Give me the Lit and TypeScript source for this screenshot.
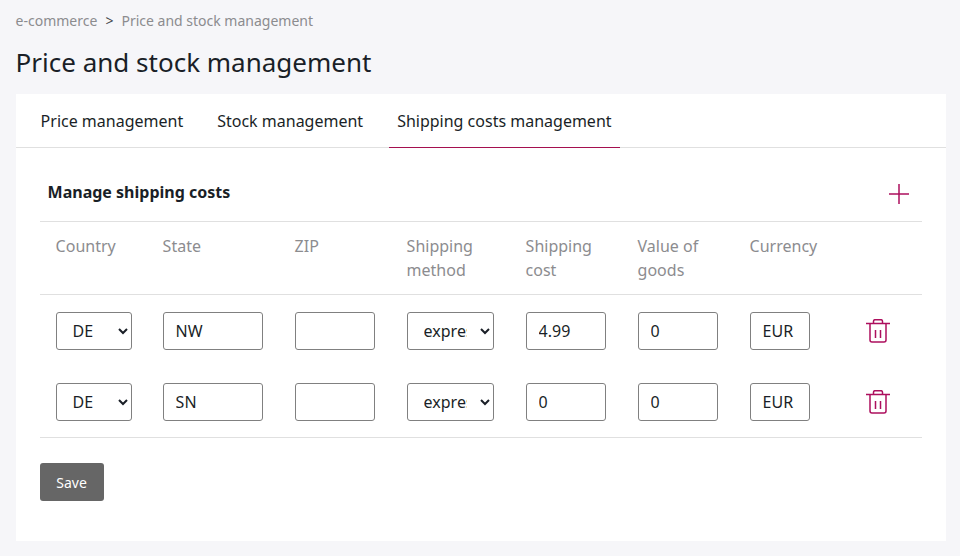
import { html, css, LitElement } from 'lit';
import { customElement, state } from 'lit/decorators.js';

interface ShippingRow {
  country: string;
  state: string;
  zip: string;
  method: string;
  cost: string;
  goods: string;
  currency: string;
}

@customElement('app-root')
export class AppRoot extends LitElement {
  static override styles = css`
    :host {
      display: block;
      min-height: 556px;
      box-sizing: border-box;
      padding: 12px 14px 15px 15.6px;
      background: #f6f6f9;
      color: #1a1f27;
      font-family: 'Noto Sans', sans-serif;
      font-size: 16px;
    }

    .breadcrumb {
      display: flex;
      gap: 8px;
      height: 18px;
      font-size: 14px;
      line-height: 18px;
      color: #8c8c8f;
    }

    .breadcrumb .sep {
      color: #44474d;
    }

    h1 {
      margin: 14px 0 14px;
      font-size: 26px;
      font-weight: 400;
      line-height: 36px;
    }

    .card {
      background: #fff;
      height: 447px;
    }

    .tabs {
      display: flex;
      gap: 18px;
      height: 53px;
      padding-left: 17px;
      border-bottom: 1px solid #e0e0e0;
    }

    .tab {
      height: 54px;
      box-sizing: border-box;
      padding: 15px 8px 0;
      line-height: 24px;
    }

    .tab.active {
      border-bottom: 1px solid #a5104f;
    }

    .body {
      padding: 0 24px;
    }

    .heading {
      display: flex;
      justify-content: space-between;
      align-items: flex-start;
      height: 74px;
      padding: 32px 13px 0 8px;
      box-sizing: border-box;
      border-bottom: 1px solid #e0e0e0;
    }

    .heading h2 {
      margin: 0;
      font-size: 16px;
      font-weight: 700;
      line-height: 24px;
    }

    .heading svg {
      display: block;
      margin-top: 4px;
    }

    .row {
      display: grid;
      grid-template-columns: 107px 132px 112px 119px 112px 112px 116px 1fr;
      padding-left: 16px;
    }

    .head {
      height: 73px;
      padding-top: 12px;
      box-sizing: border-box;
      border-bottom: 1px solid #e0e0e0;
      line-height: 24px;
      color: #8c8c8f;
    }

    .rows {
      display: flex;
      flex-direction: column;
      gap: 33px;
      padding: 17px 0 16px;
      border-bottom: 1px solid #e0e0e0;
    }

    .rows .row {
      align-items: center;
      height: 38px;
    }

    input,
    select {
      box-sizing: border-box;
      height: 38px;
      margin: 0;
      background: #fff;
      border: 1px solid #808080;
      border-radius: 3px;
      color: #1a1f27;
      font: inherit;
    }

    input {
      padding: 0 12px;
    }

    select {
      padding: 0 10px 0 12px;
    }

    .w-country { width: 76px; }
    .w-state { width: 100px; }
    .w-num { width: 80px; }
    .w-method { width: 87px; }
    .w-currency { width: 60px; }

    .trash {
      display: block;
    }

    .save {
      display: block;
      width: 64px;
      height: 38px;
      margin-top: 25px;
      padding: 0;
      background: #666;
      border: none;
      border-radius: 3px;
      color: #fff;
      font: inherit;
      font-size: 14px;
    }
  `;

  @state()
  private rows: ShippingRow[] = [
    { country: 'DE', state: 'NW', zip: '', method: 'express', cost: '4.99', goods: '0', currency: 'EUR' },
    { country: 'DE', state: 'SN', zip: '', method: 'express', cost: '0', goods: '0', currency: 'EUR' },
  ];

  private renderRow(row: ShippingRow) {
    return html`
      <div class="row">
        <div>
          <select class="w-country"><option>${row.country}</option></select>
        </div>
        <div><input class="w-state" .value=${row.state} /></div>
        <div><input class="w-num" .value=${row.zip} /></div>
        <div>
          <select class="w-method"><option>${row.method}</option></select>
        </div>
        <div><input class="w-num" .value=${row.cost} /></div>
        <div><input class="w-num" .value=${row.goods} /></div>
        <div><input class="w-currency" .value=${row.currency} /></div>
        <div>
          <svg class="trash" width="24" height="24" viewBox="0 0 24 24" fill="none" stroke="#ad0f5e" stroke-width="1.5">
            <path d="M0 4.5H24M7.5 4.5V2.2A1.5 1.5 0 0 1 9 .7h6a1.5 1.5 0 0 1 1.5 1.5v2.3" />
            <path d="M4 4.5V21a2 2 0 0 0 2 2h12a2 2 0 0 0 2-2V4.5M9.5 11v8M14.5 11v8" />
          </svg>
        </div>
      </div>
    `;
  }

  override render() {
    return html`
      <div class="breadcrumb">
        <span>e-commerce</span>
        <span class="sep">&gt;</span>
        <span>Price and stock management</span>
      </div>
      <h1>Price and stock management</h1>
      <div class="card">
        <div class="tabs">
          <div class="tab">Price management</div>
          <div class="tab">Stock management</div>
          <div class="tab active">Shipping costs management</div>
        </div>
        <div class="body">
          <div class="heading">
            <h2>Manage shipping costs</h2>
            <svg width="20" height="20" viewBox="0 0 20 20" fill="none" stroke="#ad0f5e" stroke-width="1.5">
              <path d="M0 10H20M10 0V20" />
            </svg>
          </div>
          <div class="row head">
            <div>Country</div>
            <div>State</div>
            <div>ZIP</div>
            <div>Shipping<br />method</div>
            <div>Shipping<br />cost</div>
            <div>Value of<br />goods</div>
            <div>Currency</div>
            <div></div>
          </div>
          <div class="rows">${this.rows.map((row) => this.renderRow(row))}</div>
          <button class="save">Save</button>
        </div>
      </div>
    `;
  }
}
